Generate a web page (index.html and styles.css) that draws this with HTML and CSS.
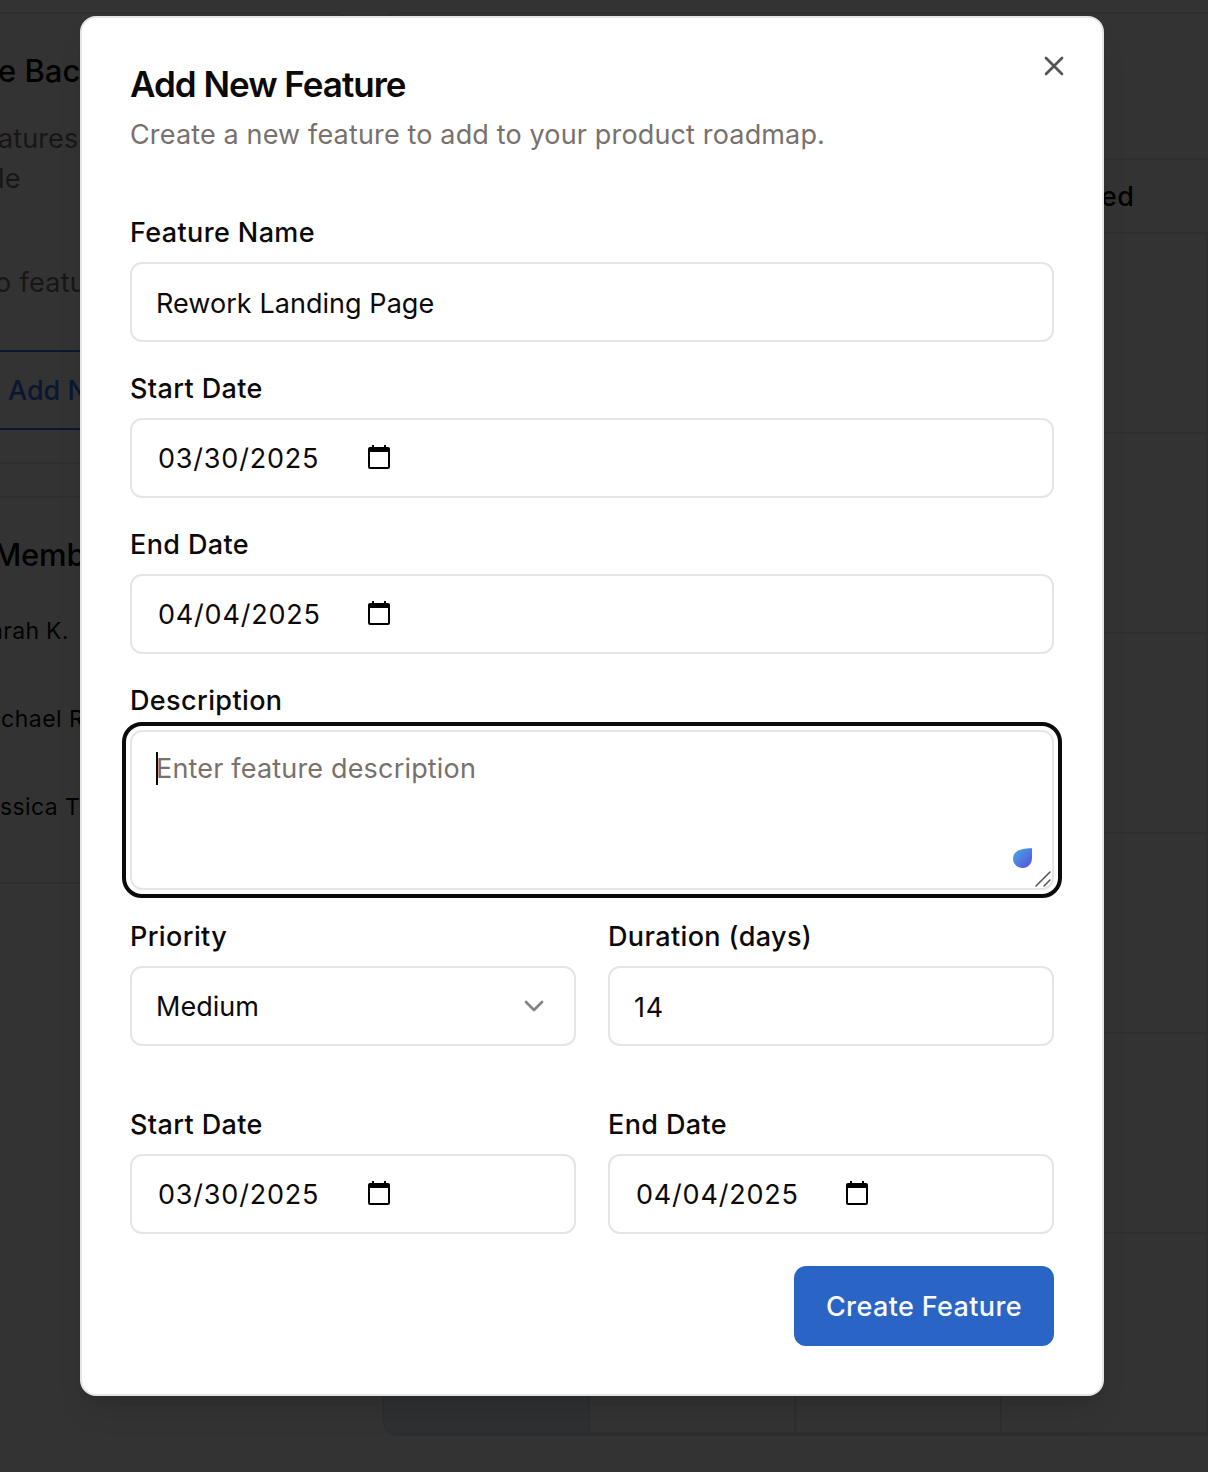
FILE: index.html
```html
<!DOCTYPE html>
<html lang="en">
<head>
<meta charset="utf-8">
<title>Add New Feature</title>
<link rel="stylesheet" href="styles.css">
</head>
<body>
<svg class="sprite" aria-hidden="true">
  <symbol id="calendar" viewBox="0 0 24 26">
    <path fill-rule="evenodd" d="M5 1h2v2h10V1h2v2h2a2 2 0 0 1 2 2v18a2 2 0 0 1-2 2H3a2 2 0 0 1-2-2V5a2 2 0 0 1 2-2h2zM3 8v15h18V8z"/>
  </symbol>
</svg>

<div class="page">
  <aside class="sidebar">
    <section class="card backlog">
      <h3 class="card-title">e Bac</h3>
      <p class="card-text">atures<br>le</p>
      <p class="empty">o featu</p>
      <div class="add-button">Add N</div>
    </section>
    <section class="card members">
      <h3 class="card-title">Memb</h3>
      <div class="member m1">arah K.</div>
      <div class="member m2">chael R</div>
      <div class="member m3">ssica T</div>
    </section>
  </aside>
  <main class="board">
    <div class="toolbar"></div>
    <div class="board-head"><span>ed</span></div>
    <div class="cells">
      <i></i><i></i><i></i><i></i>
      <i></i><i></i><i></i><i></i>
      <i></i><i></i><i></i><i></i>
      <i></i><i></i><i></i><i></i>
      <i></i><i></i><i></i><i></i>
      <i class="today"></i><i></i><i></i><i></i>
    </div>
  </main>
</div>

<div class="overlay">
  <div class="dialog" role="dialog">
    <svg class="close" viewBox="0 0 24 24"><path d="M18 6 6 18M6 6l12 12"/></svg>
    <header class="dialog-head">
      <h2 class="title">Add New Feature</h2>
      <p class="subtitle">Create a new feature to add to your product roadmap.</p>
    </header>
    <form class="form">
      <div class="field">
        <div class="label">Feature Name</div>
        <div class="input name"><span>Rework Landing Page</span></div>
      </div>
      <div class="field">
        <div class="label">Start Date</div>
        <div class="input date"><span>03/30/2025</span><svg class="cal"><use href="#calendar"/></svg></div>
      </div>
      <div class="field">
        <div class="label">End Date</div>
        <div class="input date"><span>04/04/2025</span><svg class="cal"><use href="#calendar"/></svg></div>
      </div>
      <div class="field">
        <div class="label">Description</div>
        <div class="input area">
          <i class="caret"></i>
          <span class="placeholder">Enter feature description</span>
          <svg class="drop" viewBox="0 0 20 20">
            <defs><linearGradient id="dropFill" x1="0" y1="0" x2="1" y2="1"><stop offset="0.1" stop-color="#4aa5e2"/><stop offset="0.9" stop-color="#5256df"/></linearGradient></defs>
            <path fill="url(#dropFill)" d="M19 0.2V9.5C19 15.7 15 20 9.7 20 4.2 20 0 16 0 10.8 0 3.2 6.5 0.4 19 0.2Z"/>
          </svg>
          <svg class="grip" viewBox="0 0 16 16"><path d="M1 15 15 1M9 15l6-6"/></svg>
        </div>
      </div>
      <div class="row">
        <div class="field">
          <div class="label">Priority</div>
          <div class="input select"><span>Medium</span><svg class="chevron" viewBox="0 0 24 24"><path d="m6 9 6 6 6-6"/></svg></div>
        </div>
        <div class="field">
          <div class="label">Duration (days)</div>
          <div class="input number"><span>14</span></div>
        </div>
      </div>
      <div class="row dates">
        <div class="field">
          <div class="label">Start Date</div>
          <div class="input date"><span>03/30/2025</span><svg class="cal"><use href="#calendar"/></svg></div>
        </div>
        <div class="field">
          <div class="label">End Date</div>
          <div class="input date"><span>04/04/2025</span><svg class="cal"><use href="#calendar"/></svg></div>
        </div>
      </div>
      <div class="submit">Create Feature</div>
    </form>
  </div>
</div>
</body>
</html>
```
FILE: styles.css
```css
* { box-sizing: border-box; }

body {
  margin: 0;
  height: 1472px;
  overflow: hidden;
  background: #fff;
  color: #0c0a09;
  font-family: Inter, "Liberation Sans", sans-serif;
  font-size: 27px;
  line-height: 40px;
}

h2, h3, p { margin: 0; }
.sprite { display: none; }

/* Page behind the dialog */
.page {
  display: flex;
  align-items: flex-start;
  gap: 32px;
  width: 1208px;
  height: 1472px;
  padding-top: 12px;
}
.sidebar {
  flex: none;
  width: 350px;
  display: flex;
  flex-direction: column;
  gap: 32px;
}
.card {
  border: 2px solid #e5e5e5;
  border-left: 0;
  border-radius: 0 16px 16px 0;
  white-space: nowrap;
}
.backlog { height: 452px; padding-top: 37px; }
.members { height: 388px; padding-top: 37px; }
.card-title {
  font-size: 31px;
  font-weight: 500;
  line-height: 40px;
  letter-spacing: 0;
  margin-left: -2px;
}
.members .card-title { letter-spacing: -0.2px; margin-left: -7px; }
.card-text { margin: 28px 0 0 -2px; color: #78716c; letter-spacing: 0.1px; }
.empty { margin: 64px 0 0 -5px; color: #78716c; letter-spacing: 0.3px; }
.add-button {
  width: 300px;
  height: 80px;
  margin-top: 47px;
  padding-left: 8px;
  border: 2px solid #2d78f0;
  border-left: 0;
  border-radius: 0 12px 12px 0;
  color: #2d78f0;
  font-weight: 500;
  line-height: 78px;
}
.member { height: 88px; font-size: 23px; line-height: 32px; letter-spacing: 0.5px; }
.m1 { margin: 40px 0 0 -10px; letter-spacing: 0.3px; }
.m2 { margin-left: 1px; }
.m3 { letter-spacing: 0.4px; }

.board {
  flex: none;
  width: 828px;
  border: 2px solid #e5e5e5;
  border-right: 0;
  border-radius: 16px 0 0 16px;
  overflow: hidden;
}
.toolbar { height: 146px; border-bottom: 2px solid #e5e5e5; }
.board-head {
  height: 74px;
  padding-left: 717px;
  border-bottom: 2px solid #e5e5e5;
  font-weight: 500;
  line-height: 74px;
  letter-spacing: 0.3px;
}
.cells { display: grid; grid-template-columns: repeat(4, 206px); grid-auto-rows: 200px; }
.cells i { border: solid #e5e5e5; border-width: 0 2px 2px 0; }
.cells .today { background: #e9eff9; }

/* Dialog */
.overlay {
  position: absolute;
  inset: 0;
  padding: 16px 0 0 80px;
  background: rgba(0, 0, 0, 0.8);
}
.dialog {
  position: relative;
  width: 1024px;
  height: 1380px;
  padding: 48px;
  border: 2px solid #e5e5e5;
  border-radius: 16px;
  background: #fff;
  box-shadow: 0 20px 30px -6px rgba(0, 0, 0, 0.1), 0 8px 12px -8px rgba(0, 0, 0, 0.1);
}
.close {
  position: absolute;
  top: 32px;
  right: 32px;
  width: 32px;
  height: 32px;
}
.close path, .chevron path, .grip path {
  fill: none;
  stroke: #545353;
  stroke-width: 2;
  stroke-linecap: round;
  stroke-linejoin: round;
}
.dialog-head { display: flex; flex-direction: column; gap: 12px; }
.title { font-size: 35px; font-weight: 600; line-height: 36px; letter-spacing: -1px; }
.subtitle { height: 40px; line-height: 42px; color: #78716c; letter-spacing: 0.15px; }

.form { display: flex; flex-direction: column; gap: 32px; padding-top: 64px; }
.field { display: flex; flex-direction: column; gap: 16px; }
.label { height: 28px; font-weight: 500; line-height: 30px; letter-spacing: 0.38px; }
.row { display: grid; grid-template-columns: 1fr 1fr; gap: 32px; }
.dates { padding-top: 32px; }

.input {
  display: flex;
  align-items: center;
  height: 80px;
  padding: 0 24px;
  border: 2px solid #e5e5e5;
  border-radius: 12px;
}
.input span { padding-top: 2px; }
.name span, .number span { padding-top: 4px; letter-spacing: 0.05px; }
.number span { letter-spacing: 0.8px; }
.date { padding-left: 26px; letter-spacing: 0.8px; }
.date span { width: 209px; }
.cal { width: 24px; height: 26px; margin-top: -2px; }
.area {
  position: relative;
  align-items: flex-start;
  height: 160px;
  padding-top: 16px;
  outline: 4px solid #0c0a09;
  outline-offset: 4px;
}
.area .placeholder { padding-top: 1px; color: #78716c; letter-spacing: 0.18px; }
.caret { position: absolute; left: 24px; top: 20px; width: 2px; height: 33px; background: #0c0a09; }
.drop { position: absolute; left: 881px; top: 116px; width: 20px; height: 20px; }
.grip { position: absolute; right: 1px; bottom: 1px; width: 16px; height: 16px; }
.grip path { stroke-width: 1.5; }
.select { justify-content: space-between; }
.chevron { width: 32px; height: 32px; }
.chevron path { stroke: #858484; }

.submit {
  align-self: flex-end;
  width: 260px;
  height: 80px;
  border-radius: 12px;
  background: #2a64c5;
  color: #f8fafc;
  font-weight: 500;
  line-height: 82px;
  text-align: center;
  letter-spacing: 0.38px;
}
```
